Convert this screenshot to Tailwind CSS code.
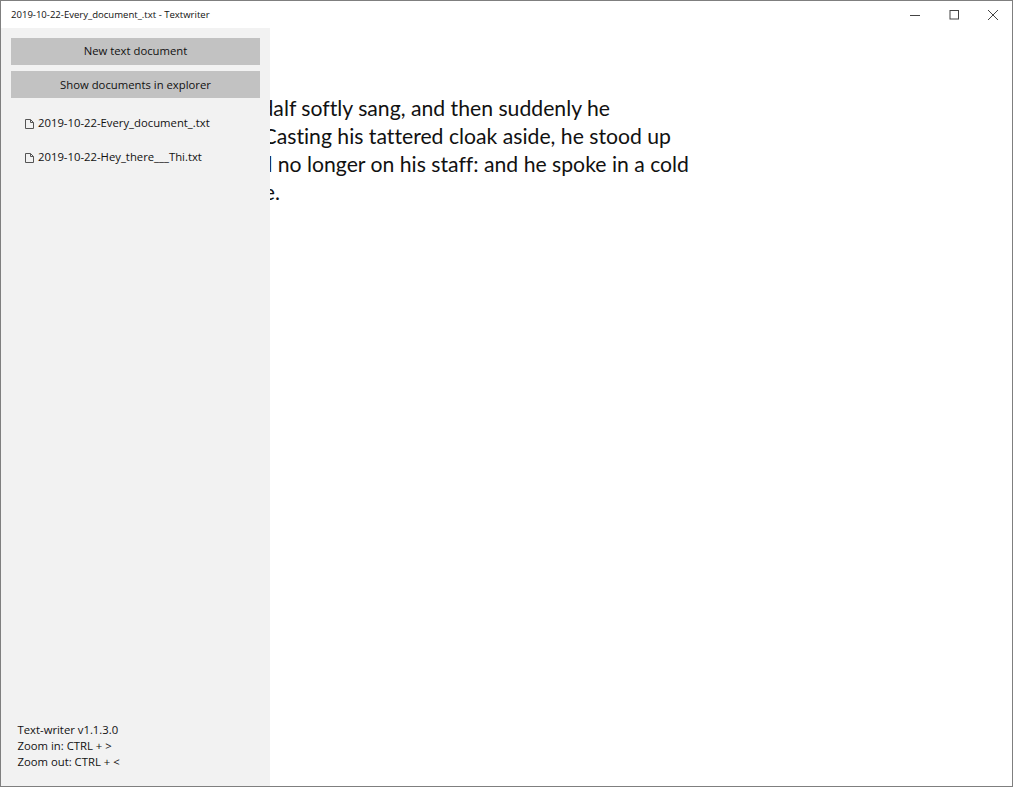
<!DOCTYPE html>
<html>
<head>
<meta charset="utf-8">
<script src="https://cdn.jsdelivr.net/npm/@tailwindcss/browser@4"></script>
</head>
<body class="bg-white">
<div class="relative w-[1013px] h-[787px] overflow-hidden border border-[#7f7f7f] bg-white text-black font-['Open_Sans','Roboto',sans-serif]">
  <header class="flex items-center justify-between h-[27px]">
    <span class="pl-[10px] pt-[1px] text-[9.55px] text-[#111]">2019-10-22-Every_document_.txt - Textwriter</span>
    <div class="flex items-center text-[#333]">
      <div class="w-[39px] flex justify-center">
        <svg width="10" height="10" viewBox="0 0 10 10"><path d="M0 5.5H10" stroke="#444" stroke-width="1"/></svg>
      </div>
      <div class="w-[39px] flex justify-center">
        <svg width="10" height="10" viewBox="0 0 10 10" fill="none"><rect x="1" y="0.5" width="8.5" height="8.5" stroke="#444"/></svg>
      </div>
      <div class="w-[39px] flex justify-center">
        <svg width="10" height="10" viewBox="0 0 10 10"><path d="M0 0L10 10M10 0L0 10" stroke="#444" stroke-width="1"/></svg>
      </div>
    </div>
  </header>
  <main class="pt-[66px] font-['Lato','Roboto',sans-serif] [font-variant-ligatures:none] text-[21.2px] leading-[28px] text-[#111] whitespace-nowrap">
    <div class="w-[609px] flex justify-end">As the old man sang, Gandalf softly sang, and then suddenly he</div>
    <div class="w-[670px] flex justify-end">changed. Casting his tattered cloak aside, he stood up</div>
    <div class="w-[688px] flex justify-end">and leaned no longer on his staff: and he spoke in a cold</div>
    <div class="w-[279px] flex justify-end">clear voice.</div>
  </main>
  <aside class="absolute left-0 top-[27px] bottom-0 w-[269px] bg-[#f2f2f2] flex flex-col px-[10px] pt-[10px] pb-[16px] text-[11.3px] text-[#111]">
    <div class="flex flex-col gap-[6px]">
      <button class="h-[27px] bg-[#c2c2c2] flex items-center justify-center">New text document</button>
      <button class="h-[27px] pt-[1px] bg-[#c2c2c2] flex items-center justify-center">Show documents in explorer</button>
    </div>
    <ul class="flex flex-col gap-[17px] mt-[17px] pl-[14px]">
      <li class="flex items-center gap-[4px] h-[17px]">
        <svg width="9" height="10" viewBox="0 0 9 10" fill="none" stroke="#555"><path d="M0.5 0.5H5.5L8.5 3.5V9.5H0.5ZM5.5 0.5V3.5H8.5"/></svg>
        <span>2019-10-22-Every_document_.txt</span>
      </li>
      <li class="flex items-center gap-[4px] h-[17px]">
        <svg width="9" height="10" viewBox="0 0 9 10" fill="none" stroke="#555"><path d="M0.5 0.5H5.5L8.5 3.5V9.5H0.5ZM5.5 0.5V3.5H8.5"/></svg>
        <span>2019-10-22-Hey_there___Thi.txt</span>
      </li>
    </ul>
    <div class="mt-auto pl-[6.5px] leading-[16px]">
      <p>Text-writer v1.1.3.0</p>
      <p>Zoom in: CTRL + &gt;</p>
      <p>Zoom out: CTRL + &lt;</p>
    </div>
  </aside>
</div>
</body>
</html>
